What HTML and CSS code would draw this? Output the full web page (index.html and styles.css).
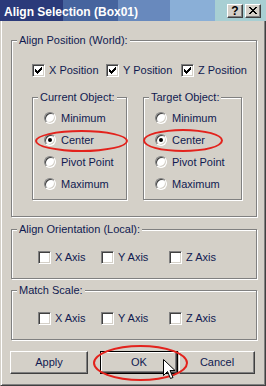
FILE: index.html
```html
<!DOCTYPE html>
<html lang="en">
<head>
  <meta charset="UTF-8">
  <title>Align Selection</title>
  <link rel="stylesheet" href="styles.css">
</head>
<body>

<div class="window">
  <div class="titlebar">
    <span class="title">Align Selection (Box01)</span>
    <span class="cap-btn help">?</span>
    <span class="cap-btn close">
      <svg width="8" height="7" viewBox="0 0 8 7"><path d="M0 0h2v1h-2z M6 0h2v1h-2z M1 1h2v1h-2z M5 1h2v1h-2z M2 2h4v1h-4z M3 3h2v1h-2z M2 4h4v1h-4z M1 5h2v1h-2z M5 5h2v1h-2z M0 6h2v1h-2z M6 6h2v1h-2z" fill="#000"/></svg>
    </span>
  </div>

  <div class="frame">
    <div class="group outer">
      <div class="group-title">Align Position (World):</div>
      <div class="check-row pos">
        <label class="check"><span class="box on"><svg width="7" height="7" viewBox="0 0 7 7"><path d="M0 2h1v3h-1z M1 3h1v3h-1z M2 4h1v3h-1z M3 3h1v3h-1z M4 2h1v3h-1z M5 1h1v3h-1z M6 0h1v3h-1z" fill="#000"/></svg></span>X Position</label>
        <label class="check"><span class="box on"><svg width="7" height="7" viewBox="0 0 7 7"><path d="M0 2h1v3h-1z M1 3h1v3h-1z M2 4h1v3h-1z M3 3h1v3h-1z M4 2h1v3h-1z M5 1h1v3h-1z M6 0h1v3h-1z" fill="#000"/></svg></span>Y Position</label>
        <label class="check"><span class="box on"><svg width="7" height="7" viewBox="0 0 7 7"><path d="M0 2h1v3h-1z M1 3h1v3h-1z M2 4h1v3h-1z M3 3h1v3h-1z M4 2h1v3h-1z M5 1h1v3h-1z M6 0h1v3h-1z" fill="#000"/></svg></span>Z Position</label>
      </div>

      <div class="objects">
        <div class="group sub current">
          <div class="group-title">Current Object:</div>
          <div class="radios">
            <div class="radio"><span class="dot"></span>Minimum</div>
            <div class="radio"><span class="dot on"></span>Center</div>
            <div class="radio"><span class="dot"></span>Pivot Point</div>
            <div class="radio"><span class="dot"></span>Maximum</div>
          </div>
        </div>
        <div class="group sub target">
          <div class="group-title">Target Object:</div>
          <div class="radios">
            <div class="radio"><span class="dot"></span>Minimum</div>
            <div class="radio"><span class="dot on"></span>Center</div>
            <div class="radio"><span class="dot"></span>Pivot Point</div>
            <div class="radio"><span class="dot"></span>Maximum</div>
          </div>
        </div>
      </div>
    </div>

    <div class="group orient">
      <div class="group-title">Align Orientation (Local):</div>
      <div class="check-row axes">
        <label class="check"><span class="box"></span>X Axis</label>
        <label class="check"><span class="box"></span>Y Axis</label>
        <label class="check"><span class="box"></span>Z Axis</label>
      </div>
    </div>

    <div class="group scale">
      <div class="group-title">Match Scale:</div>
      <div class="check-row axes">
        <label class="check"><span class="box"></span>X Axis</label>
        <label class="check"><span class="box"></span>Y Axis</label>
        <label class="check"><span class="box"></span>Z Axis</label>
      </div>
    </div>

    <div class="buttons">
      <span class="btn apply">Apply</span>
      <span class="btn ok">OK</span>
      <span class="btn cancel">Cancel</span>
    </div>
  </div>

  <!-- red marks drawn over the dialog -->
  <span class="mark mark-current"></span>
  <span class="mark mark-target"></span>
  <span class="mark mark-ok"></span>

  <svg class="cursor" width="13" height="22" viewBox="0 0 13 22">
    <path d="M0.5 0.5 L0.5 16.5 L4.5 12.5 L7.5 19.5 L10 18.5 L7 11.5 L12 11.5 Z" fill="#fff" stroke="#000" stroke-width="1" stroke-linejoin="miter"/>
  </svg>
</div>

</body>
</html>
```

FILE: styles.css
```css
body { margin: 0; background: #d4d0c8; }

.window { position: relative; width: 266px; height: 386px; overflow: hidden; font-family: "Liberation Sans", Arial, sans-serif; font-size: 11px; color: #101a50; }

/* title bar, banded like the original capture */
.titlebar { display: flex; align-items: center; height: 21px; padding: 0 5px 0 4px; box-sizing: border-box;
  background: linear-gradient(to right, #2b3a7a 0, #2b3a7a 63px, #46649e 63px, #46649e 118px, #6889bd 118px, #6889bd 170px, #8aafd7 170px, #8aafd7 215px, #a8cfd3 215px); }
.title { flex: 1; color: #fff; font-weight: bold; font-size: 12px; padding-top: 2px; }
.cap-btn { width: 16px; height: 14px; box-sizing: border-box; display: flex; align-items: center; justify-content: center; background: #d4d0c8;
  border: 1px solid; border-color: #fff #404040 #404040 #fff; box-shadow: inset -1px -1px 0 #808080; color: #000; }
.help { font-weight: bold; font-size: 12px; margin-right: 2px; }

.frame { height: 365px; box-sizing: border-box; padding: 0 8px 0 10px; border-left: 1px solid #d4d0c8; border-right: 1px solid #404040; border-bottom: 1px solid #404040;
  box-shadow: inset 1px 0 0 #fff, inset -1px -1px 0 #808080; overflow: hidden; }

.group { border: 1px solid #808080; box-shadow: 1px 1px 0 #fff, inset 1px 1px 0 #fff; }
.group-title { width: fit-content; margin: -7px 0 0 5px; padding: 0 2px; line-height: 13px; background: #d4d0c8; }

.outer { margin-top: 19px; padding-bottom: 16px; }
.orient { margin-top: 12px; padding-bottom: 14px; }
.scale { margin-top: 11px; padding-bottom: 14px; }

.check-row { display: grid; margin-top: 17px; }
.check-row.pos { grid-template-columns: 74px 75px auto; padding-left: 20px; }
.check-row.axes { grid-template-columns: 63px 68px auto; padding-left: 26px; margin-top: 15px; }
.check { display: flex; align-items: center; gap: 4px; height: 13px; line-height: 13px; }
.box { width: 13px; height: 13px; box-sizing: border-box; display: flex; align-items: center; justify-content: center; background: #fff;
  border: 1px solid; border-color: #808080 #fff #fff #808080; box-shadow: inset 1px 1px 0 #404040, inset -1px -1px 0 #d4d0c8; }

.objects { display: grid; grid-template-columns: 95px 99px; gap: 16px; margin-top: 20px; padding-left: 20px; }
.sub { padding-bottom: 4px; }
.radios { margin-top: 3px; padding-left: 11px; }
.radio { display: flex; align-items: center; gap: 5px; height: 22px; }
.dot { position: relative; width: 12px; height: 12px; box-sizing: border-box; border-radius: 50%; background: #fff;
  border: 1px solid; border-color: #808080 #fff #fff #808080; box-shadow: inset 1px 1px 0 #404040, inset -1px -1px 0 #d4d0c8; }
.dot.on::after { content: ""; position: absolute; left: 3px; top: 3px; width: 4px; height: 4px; border-radius: 50%; background: #000; }

.buttons { display: flex; margin-top: 11px; margin-left: -1px; }
.btn { height: 23px; box-sizing: border-box; line-height: 21px; text-align: center; background: #d4d0c8;
  border: 1px solid; border-color: #fff #404040 #404040 #fff; box-shadow: inset -1px -1px 0 #808080; }
.apply { width: 78px; }
.ok { width: 78px; margin-left: 12px; border-color: #000; box-shadow: inset 1px 1px 0 #fff, inset -1px -1px 0 #404040, inset -2px -2px 0 #808080; }
.cancel { width: 76px; margin-left: 1px; }

.mark { position: absolute; border: 2px solid #e3221c; border-radius: 50%; }
.mark-current { left: 35px; top: 130px; width: 89px; height: 18px; }
.mark-target { left: 143px; top: 129px; width: 76px; height: 19px; }
.mark-ok { left: 93px; top: 345px; width: 91px; height: 32px; }

.cursor { position: absolute; left: 163px; top: 359px; }
```
